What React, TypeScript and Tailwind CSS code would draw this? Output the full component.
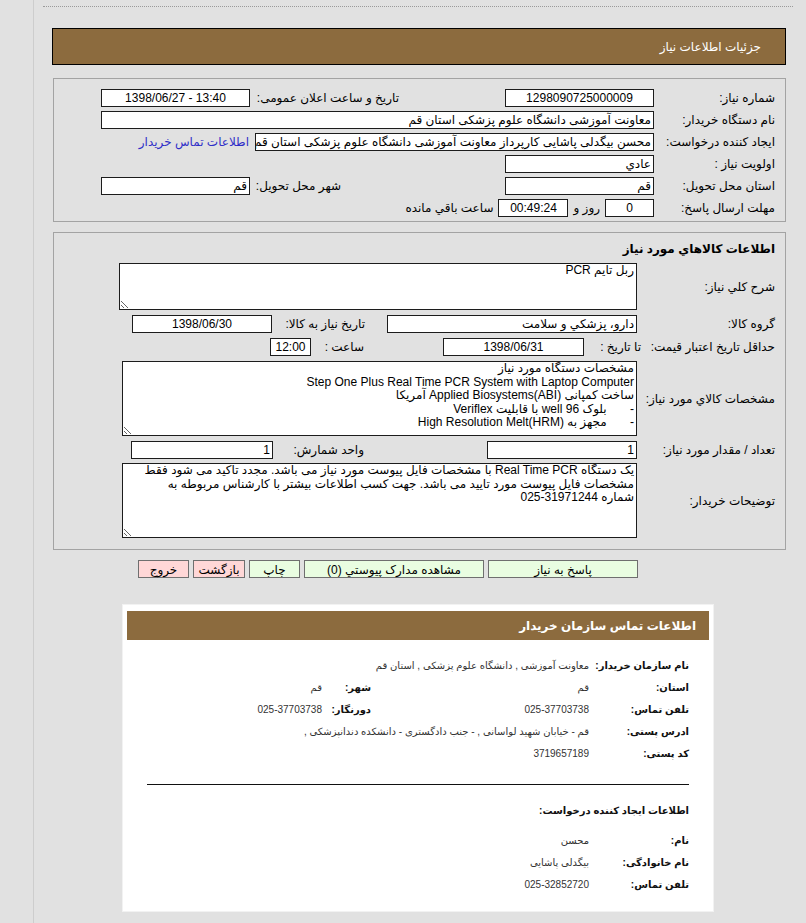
import clsx from 'clsx';
import type { ReactNode } from 'react';

const FONT = "font-['Liberation_Sans','DejaVu_Sans',sans-serif]";

// input-like read-only box
const Box = ({ className, center, children }: { className?: string; center?: boolean; children?: ReactNode }) => (
  <div
    className={clsx(
      'h-[18px] shrink-0 overflow-hidden whitespace-nowrap border border-[#1c1c1c] bg-white px-[2px] text-[12px] leading-[16px] text-black',
      center ? 'text-center' : 'text-right',
      className
    )}
  >
    {children}
  </div>
);

const Area = ({ className, value }: { className?: string; value: string }) => (
  <textarea
    readOnly
    dir="rtl"
    value={value}
    className={clsx(
      'shrink-0 resize overflow-hidden border border-[#1c1c1c] bg-white px-[2px] py-0 text-[12px] leading-[13.5px] text-black outline-none',
      FONT,
      className
    )}
  />
);

const Label = ({ className, children }: { className?: string; children: ReactNode }) => (
  <div className={clsx('shrink-0 whitespace-nowrap text-right text-[12px] text-black', className)}>{children}</div>
);

const Btn = ({ tone, className, children }: { tone: 'green' | 'pink'; className: string; children: ReactNode }) => (
  <div
    className={clsx(
      'h-[18px] shrink-0 border border-[#6f6f6f] pt-[1px] text-center text-[12px] leading-[17px] text-black',
      tone === 'green' ? 'bg-[#e9fde1]' : 'bg-[#ffd7d7]',
      className
    )}
  >
    {children}
  </div>
);

const specs = `مشخصات دستگاه مورد نیاز
Step One Plus Real Time PCR System with Laptop Computer
ساخت کمپانی Applied Biosystems(ABI) آمریکا
-       بلوک 96 well با قابلیت Veriflex
-       مجهز به High Resolution Melt(HRM)`;

const notes = `یک دستگاه Real Time PCR با مشخصات فایل پیوست مورد نیاز می باشد. مجدد تاکید می شود فقط
مشخصات فایل پیوست مورد تایید می باشد. جهت کسب اطلاعات بیشتر با کارشناس مربوطه به
شماره \u2066025-31971244\u2069`;

const CardRow = ({ label, value, label2, value2, className }: { label: string; value: string; label2?: string; value2?: string; className?: string }) => (
  <div className={clsx('flex h-[22px] items-center', className)}>
    <div className="w-[100px] shrink-0 whitespace-nowrap text-[10px] font-bold text-[#111]">{label}</div>
    <div className="w-[218px] shrink-0 whitespace-nowrap text-[10px] text-[#333]">{value}</div>
    {label2 && <div className="w-[49px] shrink-0 whitespace-nowrap text-[10px] font-bold text-[#111]">{label2}</div>}
    {value2 && <div className="whitespace-nowrap text-[10px] text-[#333]">{value2}</div>}
  </div>
);

export default function App() {
  return (
    <div dir="rtl" className={clsx('min-h-screen bg-[#e1e1e1]', FONT)}>
      <div dir="ltr" className="ml-[33px] min-h-screen border-l border-[#cdcdcd] pt-[6px] pb-[13px]">
        <div className="ml-[9px] mr-[13px] border-t border-dotted border-[#9a9a9a]" />

        {/* page title */}
        <div dir="rtl" className="ml-[18px] mt-[21px] flex h-[37px] w-[734px] items-center border border-black bg-[#8c6b3e] pr-[24px] text-[12px] text-white">
          جزئیات اطلاعات نیاز
        </div>

        {/* general info */}
        <div dir="rtl" className="ml-[19px] mt-[13px] w-[733px] border border-[#a3a3a3] pr-[10px] pt-[8px] pb-[2px]">
          <div className="flex h-[22px] items-center">
            <Label className="w-[121px]">شماره نیاز:</Label>
            <Box center className="w-[149px]">1298090725000009</Box>
            <div className="w-[106px] shrink-0" />
            <Label className="w-[149px]">تاریخ و ساعت اعلان عمومی:</Label>
            <Box center className="w-[149px]">
              <span dir="ltr">1398/06/27 - 13:40</span>
            </Box>
          </div>
          <div className="flex h-[22px] items-center">
            <Label className="w-[121px]">نام دستگاه خریدار:</Label>
            <Box className="w-[553px]">معاونت آموزشی دانشگاه علوم پزشکی استان قم</Box>
          </div>
          <div className="flex h-[22px] items-center">
            <Label className="w-[121px]">ایجاد کننده درخواست:</Label>
            <Box className="w-[399px]">محسن بیگدلی پاشایی کارپرداز معاونت آموزشی دانشگاه علوم پزشکی استان قم</Box>
            <a className="mr-[6px] whitespace-nowrap text-[12px] text-[#2f2fc8]">اطلاعات تماس خریدار</a>
          </div>
          <div className="flex h-[22px] items-center">
            <Label className="w-[121px]">اولویت نیاز :</Label>
            <Box className="w-[149px]">عادي</Box>
          </div>
          <div className="flex h-[22px] items-center">
            <Label className="w-[121px]">استان محل تحویل:</Label>
            <Box className="w-[149px]">قم</Box>
            <div className="w-[106px] shrink-0" />
            <Label className="w-[149px] pr-[58px]">شهر محل تحویل:</Label>
            <Box className="w-[149px]">قم</Box>
          </div>
          <div className="flex h-[22px] items-center">
            <Label className="w-[121px]">مهلت ارسال پاسخ:</Label>
            <Box center className="w-[49px]">0</Box>
            <Label className="mx-[5px]">روز و</Label>
            <Box center className="w-[70px]">00:49:24</Box>
            <Label className="mr-[5px]">ساعت باقي مانده</Label>
          </div>
        </div>

        {/* goods info */}
        <div dir="rtl" className="ml-[19px] mt-[10px] flex w-[733px] flex-col border border-[#a3a3a3] pr-[10px] pt-[8px] pb-[11px]">
          <div className="h-[16px] text-[12px] font-bold leading-[16px] text-black">اطلاعات کالاهاي مورد نیاز</div>
          <div className="mt-[6px] flex h-[47px] items-center">
            <Label className="w-[138px]">شرح کلي نیاز:</Label>
            <Area className="h-[47px] w-[518px]" value="ربل تایم PCR" />
          </div>
          <div className="mt-[5px] flex h-[18px] items-center">
            <Label className="w-[138px]">گروه کالا:</Label>
            <Box className="w-[250px]">دارو، پزشکي و سلامت</Box>
            <div className="w-[22px] shrink-0" />
            <Label className="w-[93px]">تاریخ نیاز به کالا:</Label>
            <Box center className="w-[140px]">1398/06/30</Box>
          </div>
          <div className="mt-[5px] flex h-[18px] items-center">
            <Label className="w-[134px]">حداقل تاریخ اعتبار قیمت:</Label>
            <Label className="w-[57px]">تا تاریخ :</Label>
            <Box center className="w-[141px]">1398/06/31</Box>
            <div className="w-[79px] shrink-0" />
            <Label className="w-[53px]">ساعت :</Label>
            <Box center className="w-[41px]">12:00</Box>
          </div>
          <div className="mt-[5px] flex h-[75px] items-center">
            <Label className="w-[138px]">مشخصات کالاي مورد نیاز:</Label>
            <Area className="h-[75px] w-[515px]" value={specs} />
          </div>
          <div className="mt-[5px] flex h-[18px] items-center">
            <Label className="w-[138px]">تعداد / مقدار مورد نیاز:</Label>
            <Box className="w-[150px]">1</Box>
            <div className="w-[123px] shrink-0" />
            <Label className="w-[91px]">واحد شمارش:</Label>
            <Box className="w-[142px]">1</Box>
          </div>
          <div className="mt-[4px] flex h-[75px] items-center">
            <Label className="w-[138px]">توضیحات خریدار:</Label>
            <Area className="h-[75px] w-[515px]" value={notes} />
          </div>
        </div>

        {/* actions */}
        <div dir="rtl" className="ml-[19px] mt-[10px] flex w-[733px] gap-[4px] pr-[148px]">
          <Btn tone="green" className="w-[150px]">پاسخ به نیاز</Btn>
          <Btn tone="green" className="w-[180px]">مشاهده مدارک پیوستي (0)</Btn>
          <Btn tone="green" className="w-[51px]">چاپ</Btn>
          <Btn tone="pink" className="w-[52px]">بازگشت</Btn>
          <Btn tone="pink" className="w-[51px]">خروج</Btn>
        </div>

        {/* buyer contact card */}
        <div dir="rtl" className="ml-[88px] mt-[26px] w-[592px] border border-[#f2f2f2] bg-white px-[4px] pt-[6px] pb-[16px]">
          <div className="flex h-[29px] items-center bg-[#8c6b3e] pr-[13px] text-[12px] font-bold text-white">
            اطلاعات تماس سازمان خریدار
          </div>
          <div className="mt-[14px] pr-[20px]">
            <CardRow label="نام سازمان خریدار:" value="معاونت آموزشی , دانشگاه علوم پزشکی , استان قم" />
            <CardRow label="استان:" value="قم" label2="شهر:" value2="قم" />
            <CardRow label="تلفن تماس:" value="025-37703738" label2="دورنگار:" value2="025-37703738" />
            <CardRow label="ادرس پستی:" value="قم - خیابان شهید لواسانی , - جنب دادگستری - دانشکده دندانپزشکی ," />
            <CardRow label="کد پستی:" value="3719657189" />
          </div>
          <div className="mx-[20px] mt-[20px] border-t border-[#111]" />
          <div className="mt-[14px] pr-[20px]">
            <div className="flex h-[22px] items-center text-[10px] font-bold text-[#111]">اطلاعات ایجاد کننده درخواست:</div>
            <CardRow className="mt-[8px]" label="نام:" value="محسن" />
            <CardRow label="نام خانوادگی:" value="بیگدلی پاشایی" />
            <CardRow label="تلفن تماس:" value="025-32852720" />
          </div>
        </div>
      </div>
    </div>
  );
}
